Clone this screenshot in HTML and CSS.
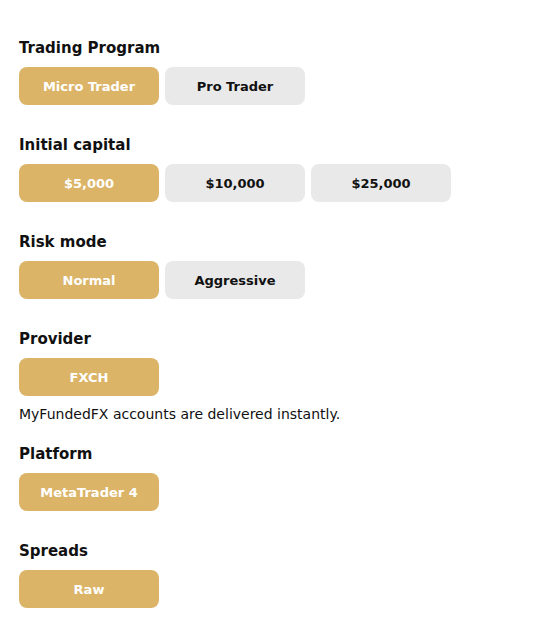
FILE: index.html
```html
<!DOCTYPE html>
<html>
<head>
<meta charset="utf-8">
<link rel="stylesheet" href="styles.css">
</head>
<body>
<div class="form">
  <section class="group">
    <h3 class="label">Trading Program</h3>
    <div class="options">
      <button class="opt active">Micro Trader</button>
      <button class="opt">Pro Trader</button>
    </div>
  </section>
  <section class="group">
    <h3 class="label">Initial capital</h3>
    <div class="options">
      <button class="opt active">$5,000</button>
      <button class="opt">$10,000</button>
      <button class="opt">$25,000</button>
    </div>
  </section>
  <section class="group">
    <h3 class="label">Risk mode</h3>
    <div class="options">
      <button class="opt active">Normal</button>
      <button class="opt">Aggressive</button>
    </div>
  </section>
  <section class="group">
    <h3 class="label">Provider</h3>
    <div class="options">
      <button class="opt active">FXCH</button>
    </div>
    <p class="note">MyFundedFX accounts are delivered instantly.</p>
  </section>
  <section class="group">
    <h3 class="label">Platform</h3>
    <div class="options">
      <button class="opt active">MetaTrader 4</button>
    </div>
  </section>
  <section class="group">
    <h3 class="label">Spreads</h3>
    <div class="options">
      <button class="opt active">Raw</button>
    </div>
  </section>
</div>
</body>
</html>
```
FILE: styles.css
```css
html, body {
  margin: 0;
  padding: 0;
  background: #ffffff;
}
body {
  font-family: "DejaVu Sans", "Liberation Sans", sans-serif;
  color: #111111;
}
.form {
  display: flex;
  flex-direction: column;
  gap: 30px;
  padding: 38px 19px 0 19px;
}
.group {
  display: flex;
  flex-direction: column;
}
.label {
  margin: 0 0 9px 0;
  font-size: 15px;
  line-height: 20px;
  font-weight: 700;
  color: #111111;
}
.options {
  display: flex;
  gap: 6px;
}
.opt {
  width: 140px;
  height: 38px;
  border: none;
  border-radius: 8px;
  background: #e9e9e9;
  color: #111111;
  font-family: inherit;
  font-size: 13px;
  font-weight: 600;
  padding: 0;
}
.opt.active {
  background: #dbb467;
  color: #ffffff;
}
.note {
  margin: 10px 0 -9px 0;
  font-size: 14px;
  line-height: 17px;
  color: #111111;
}
```
